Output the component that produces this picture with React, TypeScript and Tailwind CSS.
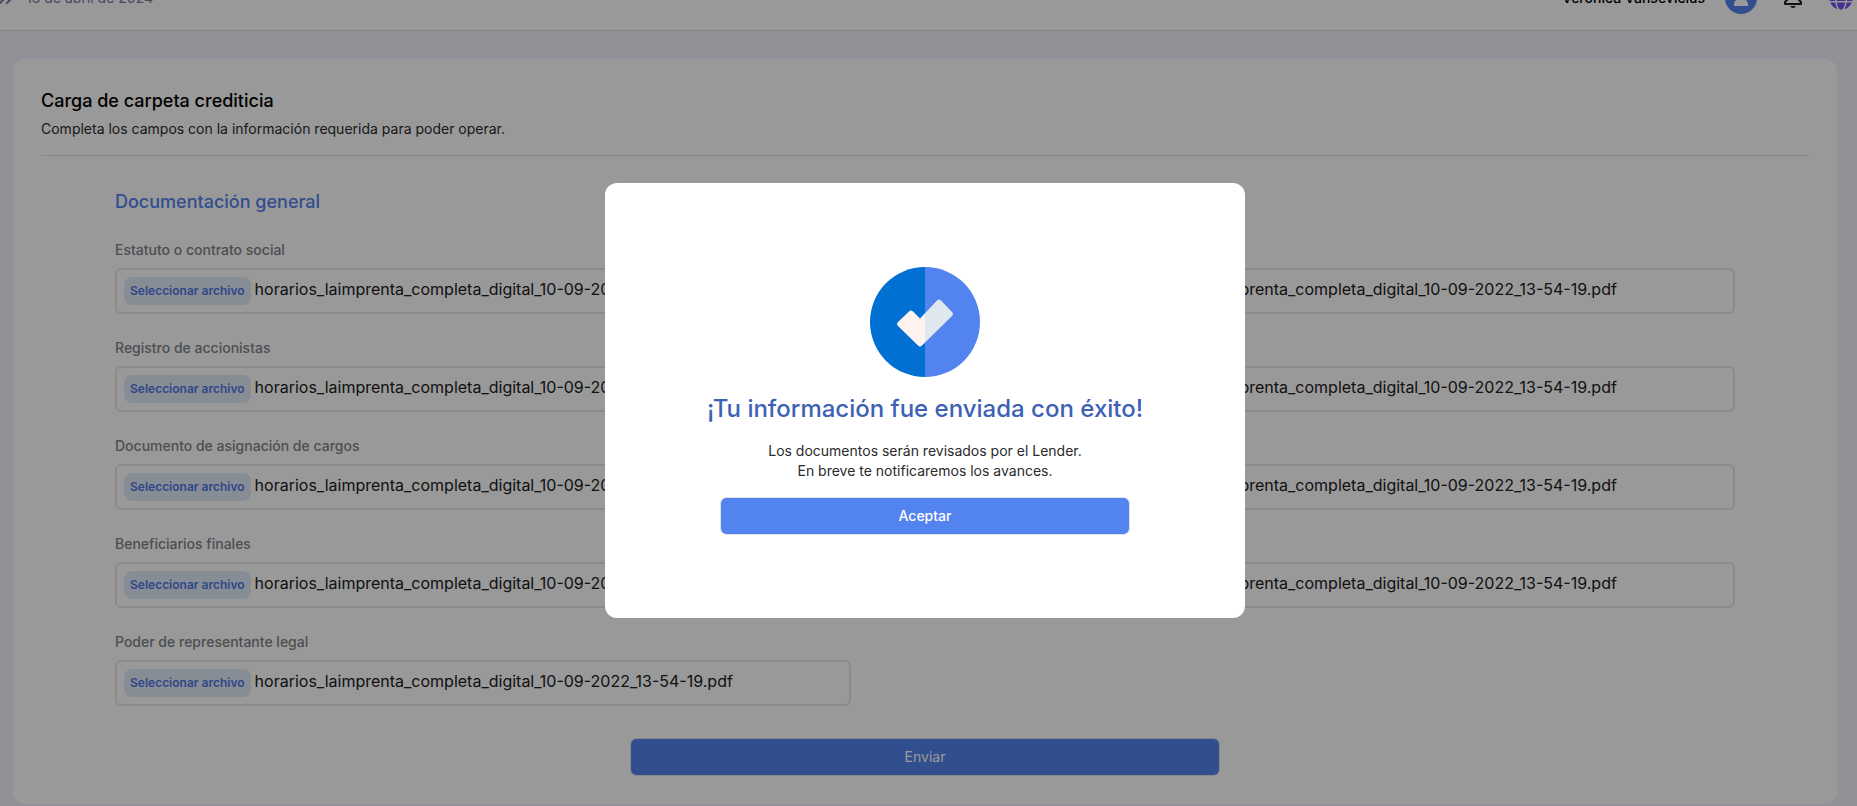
import { useState } from "react";
import { ChevronsRight } from "lucide-react";
import { BiBell } from "react-icons/bi";
import { FaGlobe } from "react-icons/fa";

const FILE_NAME = "horarios_laimprenta_completa_digital_10-09-2022_13-54-19.pdf";

const FIELDS = [
  "Estatuto o contrato social",
  "Estados contables",
  "Registro de accionistas",
  "Ventas post balance",
  "Documento de asignación de cargos",
  "Deuda financiera",
  "Beneficiarios finales",
  "Declaraciones juradas",
  "Poder de representante legal",
];

function Header() {
  return (
    <header className="-mt-[34px] flex h-[65px] items-center justify-between border-b border-[#dcdee6] bg-white pr-1">
      <div className="flex items-center gap-2 text-[#7a7a9c]">
        <button type="button" aria-label="Expandir menú" className="-ml-1.5">
          <ChevronsRight className="size-6" />
        </button>
        <span className="text-sm leading-5">18 de abril de 2024</span>
      </div>
      <div className="flex items-center gap-6">
        <div className="flex items-center gap-5">
          <span className="text-sm leading-5 font-medium text-black">Verónica Vansevicius</span>
          <svg viewBox="0 0 32 32" className="size-8" aria-hidden="true">
            <circle cx="16" cy="16" r="16" fill="#5383ee" />
            <circle cx="16" cy="12" r="4" fill="#fff" />
            <path d="M9 24v-1.500q0-5.500 7-5.500t7 5.500V24z" fill="#fff" />
          </svg>
        </div>
        <button type="button" aria-label="Notificaciones" className="text-[#1f1f24]">
          <BiBell className="size-6" />
        </button>
        <button type="button" aria-label="Idioma" className="text-[#7450ee]">
          <FaGlobe className="size-6" />
        </button>
      </div>
    </header>
  );
}

function FileField({ label, id }: { label: string; id: string }) {
  const [name, setName] = useState(FILE_NAME);
  return (
    <div className="min-w-0 px-[74px]">
      <label htmlFor={id} className="block text-sm leading-5 font-medium text-[#7f8389]">
        {label}
      </label>
      <label
        htmlFor={id}
        className="relative mt-2 flex h-[46px] cursor-pointer items-center gap-1 rounded-md border-2 border-[#e6e6e6] px-[7px]"
      >
        <span className="flex h-7 shrink-0 items-center rounded-lg bg-[#dfebf9] px-1.5 text-xs font-semibold text-[#5377e4]">
          Seleccionar archivo
        </span>
        <span className="truncate pb-1 text-base leading-5 font-normal text-[#202020]">{name}</span>
        <input
          id={id}
          type="file"
          className="sr-only"
          onChange={(e) => setName(e.target.files?.[0]?.name ?? FILE_NAME)}
        />
      </label>
    </div>
  );
}

function SuccessIcon() {
  const check =
    "M28 59q-2-2 0-4l11-10.500q2-2 4 0l7 7L67 33.500q2-2 4 0l11 11.500q2 2 0 4L52 78.500q-2 2-4 0z";
  return (
    <svg viewBox="0 0 110 110" className="size-[110px]" aria-hidden="true">
      <defs>
        <clipPath id="left-half">
          <rect width="55" height="110" />
        </clipPath>
        <clipPath id="right-half">
          <rect x="55" width="55" height="110" />
        </clipPath>
      </defs>
      <g clipPath="url(#left-half)">
        <circle cx="55" cy="55" r="55" fill="#0070d2" />
        <path d={check} fill="#fff3f2" />
      </g>
      <g clipPath="url(#right-half)">
        <circle cx="55" cy="55" r="55" fill="#5383ee" />
        <path d={check} fill="#dee8ee" />
      </g>
    </svg>
  );
}

function SuccessDialog({ onAccept }: { onAccept: () => void }) {
  return (
    <div className="fixed inset-0 flex items-center justify-center bg-black/40 pr-[7px] pb-[5px]">
      <div
        role="dialog"
        aria-modal="true"
        aria-labelledby="dialog-title"
        className="flex w-[640px] flex-col items-center rounded-xl bg-white pt-[84px] pb-[83px]"
      >
        <SuccessIcon />
        <h2 id="dialog-title" className="mt-4 text-2xl leading-8 font-medium text-[#3d61b5]">
          ¡Tu información fue enviada con éxito!
        </h2>
        <p className="mt-4 text-center text-sm leading-5 text-[#2b2b2b]">
          Los documentos serán revisados por el Lender.
          <br />
          En breve te notificaremos los avances.
        </p>
        <button
          type="button"
          onClick={onAccept}
          className="mt-4 h-[38px] w-[410px] rounded-md border border-[#dfe3ea] bg-[#5383ee] bg-clip-padding text-sm font-medium text-white"
        >
          Aceptar
        </button>
      </div>
    </div>
  );
}

export default function App() {
  const [open, setOpen] = useState(true);
  return (
    <div className="min-h-screen overflow-hidden bg-[#f0f2fa] font-['Inter',sans-serif]">
      <Header />
      <main className="pt-7 pr-5 pl-[13px]">
        <section className="rounded-xl bg-white p-7">
          <h1 className="text-lg leading-7 font-medium text-black">Carga de carpeta crediticia</h1>
          <p className="mt-1 text-sm leading-5 text-[#2b2b2b]">
            Completa los campos con la información requerida para poder operar.
          </p>
          <hr className="mt-4 border-[#dfe1e5]" />
          <h2 className="mt-8 px-[74px] text-lg leading-7 font-medium text-[#5383ee]">
            Documentación general
          </h2>
          <form onSubmit={(e) => e.preventDefault()}>
            <div className="mt-6 grid grid-cols-2 gap-y-6">
              {FIELDS.map((label, i) => (
                <FileField key={label} label={label} id={`file-${i}`} />
              ))}
            </div>
            <button
              type="submit"
              className="mx-auto mt-8 block h-[38px] w-1/3 rounded-md border border-[#dfe3ea] bg-[#5383ee] bg-clip-padding text-sm text-white"
            >
              Enviar
            </button>
          </form>
        </section>
      </main>
      {open && <SuccessDialog onAccept={() => setOpen(false)} />}
    </div>
  );
}
